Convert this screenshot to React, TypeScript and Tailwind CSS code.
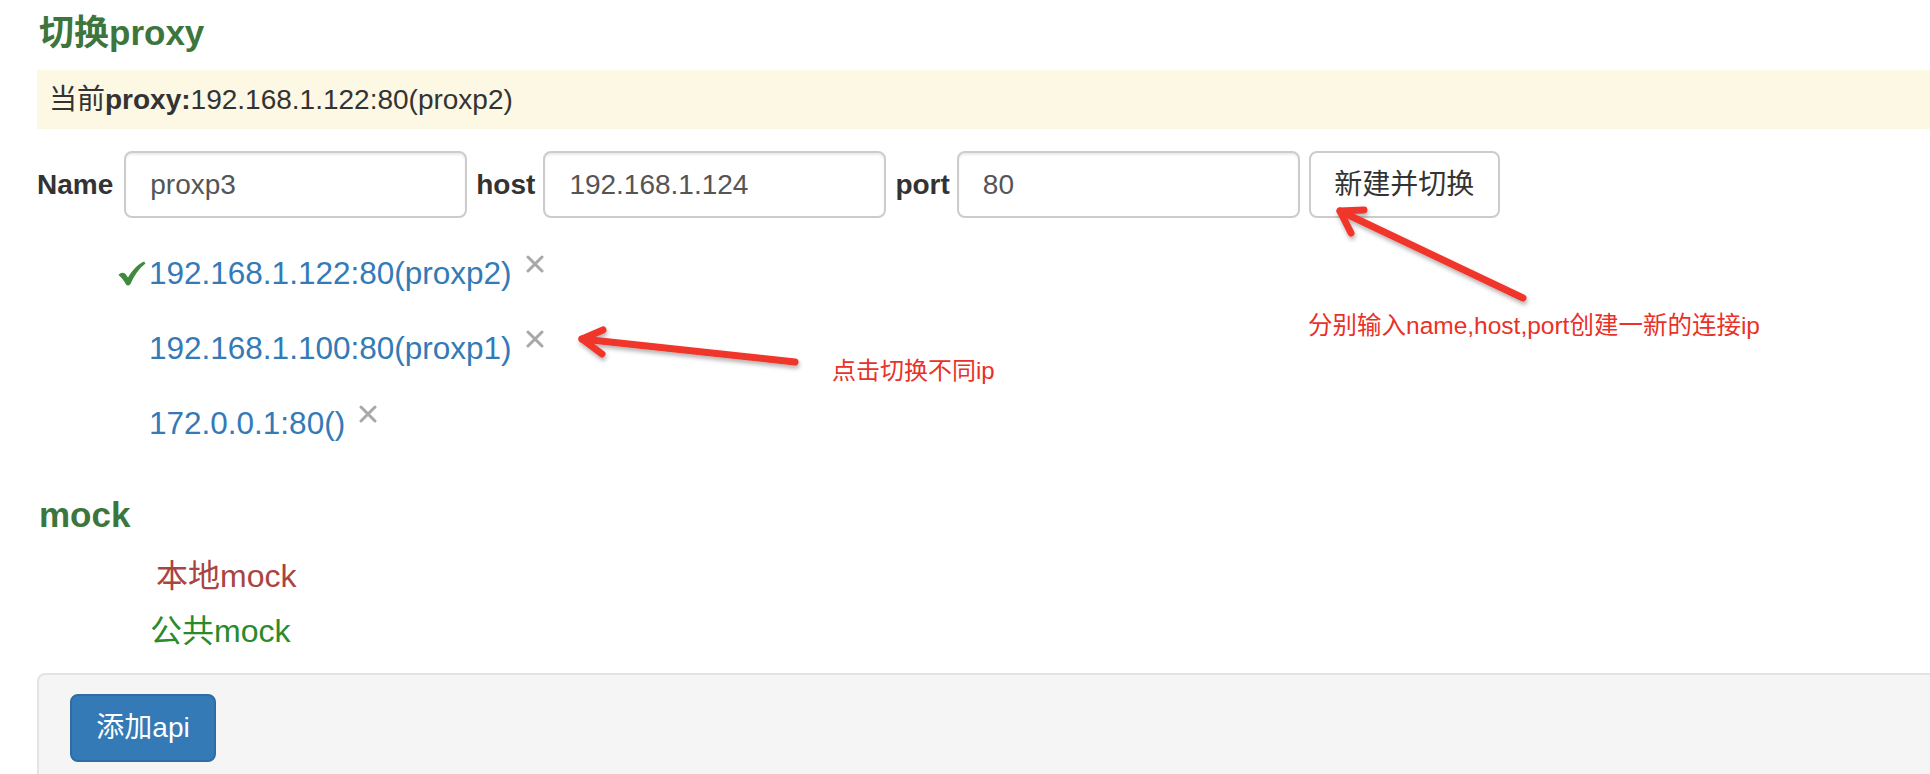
import React from 'react';

const proxies = [
  { label: '192.168.1.122:80(proxp2)', active: true },
  { label: '192.168.1.100:80(proxp1)', active: false },
  { label: '172.0.0.1:80()', active: false },
];

function CheckMark() {
  return (
    <svg width="28" height="25" viewBox="0 0 28 25" className="mr-[3px]">
      <path
        d="M0.5 14 C2.5 11.5 5.5 11 7.5 13 L10 16.5 C14 9.5 19.5 3.5 26 0.5 L27.5 2.5 C21 7.5 16 14.5 12.5 23 C11.5 24.8 9 24.8 8 23.4 C6 20 3.5 16.5 0.5 14 Z"
        fill="#3f8a3f"
      />
    </svg>
  );
}

function RemoveIcon() {
  return (
    <svg width="18" height="18" viewBox="0 0 18 18" className="ml-[14px] -mt-[20px]">
      <path d="M2 2 L16 16 M16 2 L2 16" stroke="#a8a8a8" strokeWidth="3" strokeLinecap="round" />
    </svg>
  );
}

// red annotation arrows drawn over the screenshot
function Annotations() {
  return (
    <>
      <svg width="1930" height="774" className="absolute left-0 top-0 pointer-events-none">
        <defs>
          <filter id="shadow" x="-10%" y="-10%" width="120%" height="130%">
            <feDropShadow dx="1" dy="3" stdDeviation="2" floodColor="#000" floodOpacity="0.3" />
          </filter>
        </defs>
        <g stroke="#f0352a" strokeWidth="7" strokeLinecap="round" strokeLinejoin="round" fill="none" filter="url(#shadow)">
          <path d="M1523 298 L1340 211" />
          <path d="M1364 210 L1340 211 L1351 233" />
          <path d="M795 362 L582 339" />
          <path d="M603 330 L582 339 L602 354" />
        </g>
      </svg>
      <div className="absolute left-[1308px] top-[311px] text-[24.5px] leading-[30px] text-[#ea3128] whitespace-nowrap">
        分别输入name,host,port创建一新的连接ip
      </div>
      <div className="absolute left-[832px] top-[356px] text-[24px] leading-[30px] text-[#ea3128] whitespace-nowrap">
        点击切换不同ip
      </div>
    </>
  );
}

export default function App() {
  return (
    <div className="relative w-[1930px] h-[774px] overflow-hidden bg-white text-[#333] [font-family:'Liberation_Sans','Noto_Sans_CJK_SC',sans-serif]">
      <div className="ml-[37px] w-[1910px] pt-[13px]">
        <h3 className="h-[40px] leading-[40px] text-[35px] font-bold text-[#3c763d] pl-[2px]">切换proxy</h3>

        <div className="mt-[17px] h-[59px] flex items-center pl-[12px] bg-[#fcf8e3] text-[28px]">
          当前<b>proxy:</b>192.168.1.122:80(proxp2)
        </div>

        {/* new proxy form */}
        <div className="mt-[22px] flex items-center text-[28px]">
          <label className="font-bold mr-[11px]">Name</label>
          <input
            readOnly
            value="proxp3"
            className="w-[343px] h-[67px] px-[24px] border-2 border-[#ccc] rounded-[8px] text-[#555] shadow-[inset_0_2px_2px_rgba(0,0,0,0.075)] outline-none"
          />
          <label className="font-bold ml-[9px] mr-[8px]">host</label>
          <input
            readOnly
            value="192.168.1.124"
            className="w-[343px] h-[67px] px-[24px] border-2 border-[#ccc] rounded-[8px] text-[#555] shadow-[inset_0_2px_2px_rgba(0,0,0,0.075)] outline-none"
          />
          <label className="font-bold ml-[9px] mr-[7px]">port</label>
          <input
            readOnly
            value="80"
            className="w-[343px] h-[67px] px-[24px] border-2 border-[#ccc] rounded-[8px] text-[#555] shadow-[inset_0_2px_2px_rgba(0,0,0,0.075)] outline-none"
          />
          <button className="ml-[9px] w-[191px] h-[67px] border-2 border-[#ccc] rounded-[8px] bg-white text-[#333]">
            新建并切换
          </button>
        </div>

        <ul className="mt-[18px]">
          {proxies.map((p) => (
            <li key={p.label} className="h-[75px] flex items-center text-[31.5px]">
              <div className="w-[112px] flex justify-end">{p.active && <CheckMark />}</div>
              <a className="text-[#337ab7]">{p.label}</a>
              <RemoveIcon />
            </li>
          ))}
        </ul>

        <h3 className="mt-[34px] h-[40px] leading-[40px] text-[35px] font-bold text-[#3c763d] pl-[2px]">mock</h3>

        <div className="mt-[13px] text-[32px]">
          <div className="h-[55px] flex items-center pl-[119px] text-[#a94442]">本地mock</div>
          <div className="h-[55px] flex items-center pl-[113px] text-[#2b8a2b]">公共mock</div>
        </div>

        <div className="mt-[15px] h-[140px] border-2 border-[#e3e3e3] rounded-[8px] bg-[#f5f5f5] pl-[31px] pt-[19px]">
          <button className="w-[146px] h-[68px] rounded-[8px] bg-[#337ab7] border-2 border-[#2e6da4] text-white text-[28px]">
            添加api
          </button>
        </div>
      </div>

      <Annotations />
    </div>
  );
}
